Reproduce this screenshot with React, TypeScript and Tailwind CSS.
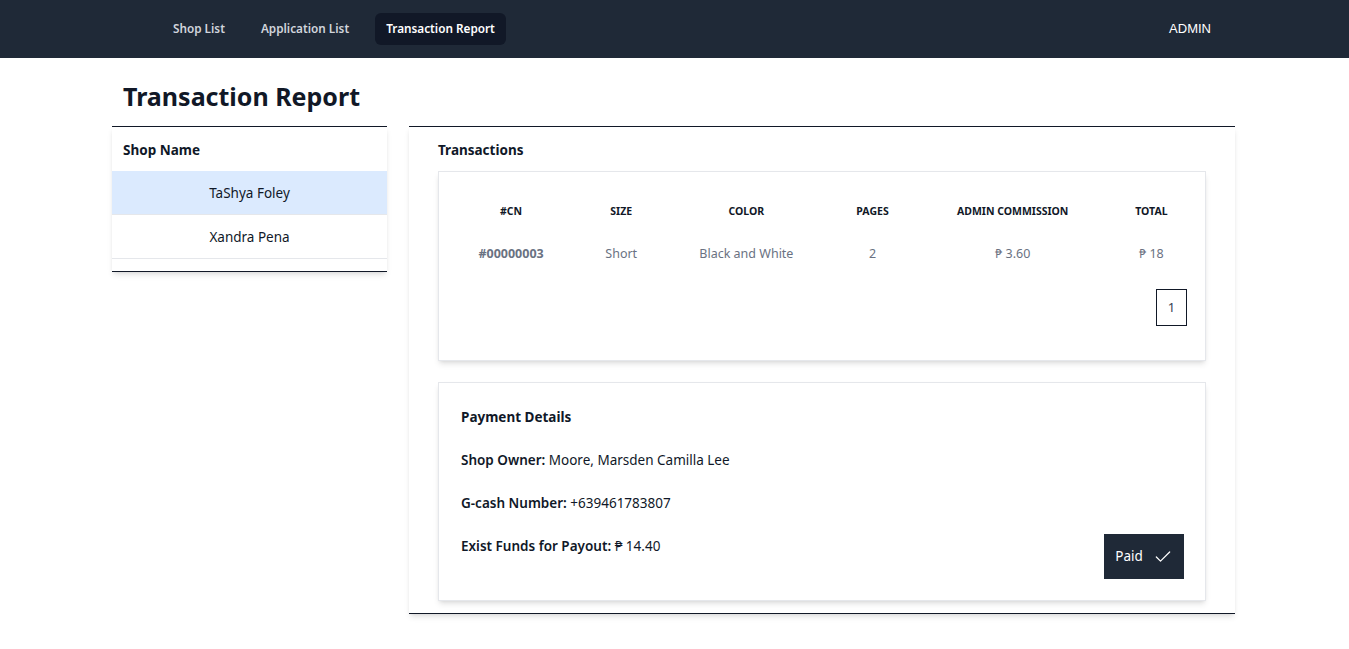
import React from 'react';
import { Check } from 'lucide-react';

const font = { fontFamily: '"Noto Sans", "Open Sans", sans-serif' };

const shops = ['TaShya Foley', 'Xandra Pena'];

const columns = [
  { label: '#CN', w: 'w-[128px]' },
  { label: 'SIZE', w: 'w-[92px]' },
  { label: 'COLOR', w: 'w-[158px]' },
  { label: 'PAGES', w: 'w-[94px]' },
  { label: 'ADMIN COMMISSION', w: 'w-[186px]' },
  { label: 'TOTAL', w: 'w-[91px]' },
];

const App: React.FC = () => {
  return (
    <div className="min-h-screen bg-white text-gray-900 font-['Noto_Sans',sans-serif]">
      {/* Nav */}
      <nav className="h-[58px] bg-[#1f2937] flex items-center">
        <div className="w-[1125px] mx-auto flex items-center justify-between">
          <div className="flex items-center pl-[50px]">
            <a className="px-[11px] py-[7px] rounded-md text-[11.75px] font-semibold text-gray-300">Shop List</a>
            <a className="ml-[14px] px-[11px] py-[7px] rounded-md text-[11.75px] font-semibold text-gray-300">Application List</a>
            <a className="ml-[15px] px-[11px] py-[7px] rounded-md text-[11.75px] font-semibold text-white bg-[#111827]">Transaction Report</a>
          </div>
          <span className="pr-[26px] text-[13px] text-white font-['Liberation_Sans',sans-serif]">ADMIN</span>
        </div>
      </nav>

      <main className="w-[1125px] mx-auto" style={font}>
        <h1 className="px-[11px] pt-[20px] pb-[12px] text-[25px] font-bold leading-[36px] text-[#111827]">Transaction Report</h1>

        <div className="flex items-start gap-[22px]">
          {/* Shop list */}
          <div className="w-[275px] border-t border-b border-[#111827] shadow-md bg-white">
            <div className="h-[44px] flex items-center px-[11px] pt-[2px] text-[13.5px] font-bold">Shop Name</div>
            {shops.map((s, i) => (
              <div
                key={s}
                className={`h-[44px] flex items-center justify-center pt-[2px] text-[13.5px] border-b border-gray-200 ${i === 0 ? 'bg-[#dbeafe]' : 'bg-white'}`}
              >
                {s}
              </div>
            ))}
            <div className="h-[12px]" />
          </div>

          {/* Transactions */}
          <div className="w-[826px] border-t border-b border-[#111827] shadow-md bg-white px-[29px] pb-[12px]">
            <h2 className="h-[44px] flex items-center pt-[2px] text-[13.5px] font-bold">Transactions</h2>
            <div className="border border-gray-200 shadow-md px-[8px] pt-[24px] pb-[34px]">
              <table className="w-full table-fixed text-center">
                <thead>
                  <tr>
                    {columns.map(c => (
                      <th key={c.label} className={`${c.w} h-[32px] text-[10.5px] font-bold text-[#111827]`}>{c.label}</th>
                    ))}
                  </tr>
                </thead>
                <tbody>
                  <tr className="text-[12.5px] text-gray-500">
                    <td className="h-[52px] font-bold">#00000003</td>
                    <td>Short</td>
                    <td>Black and White</td>
                    <td>2</td>
                    <td>₱ 3.60</td>
                    <td>₱ 18</td>
                  </tr>
                </tbody>
              </table>
              <div className="flex justify-end mt-[9px] pr-[10px]">
                <button className="w-[31px] h-[37px] border border-[#111827] text-[13px] text-gray-700">1</button>
              </div>
            </div>

            <div className="mt-[21px] border border-gray-200 shadow-md pl-[22px] pr-[21px] pt-[24px] pb-[21px] text-[13.5px]">
              <h3 className="font-bold leading-[20px]">Payment Details</h3>
              <p className="mt-[23px] leading-[20px]"><span className="font-semibold">Shop Owner:</span> Moore, Marsden Camilla Lee</p>
              <p className="mt-[23px] leading-[20px]"><span className="font-semibold">G-cash Number:</span> +639461783807</p>
              <div className="flex items-start justify-between">
                <p className="mt-[23px] leading-[20px]"><span className="font-semibold">Exist Funds for Payout:</span> ₱ 14.40</p>
                <button className="mt-[21px] w-[80px] h-[45px] bg-[#1f2937] text-white text-[13.5px] flex items-center justify-center gap-[10px]">
                  Paid <Check className="w-[20px] h-[20px]" strokeWidth={1.5} />
                </button>
              </div>
            </div>
          </div>
        </div>
      </main>
    </div>
  );
};

export default App;
